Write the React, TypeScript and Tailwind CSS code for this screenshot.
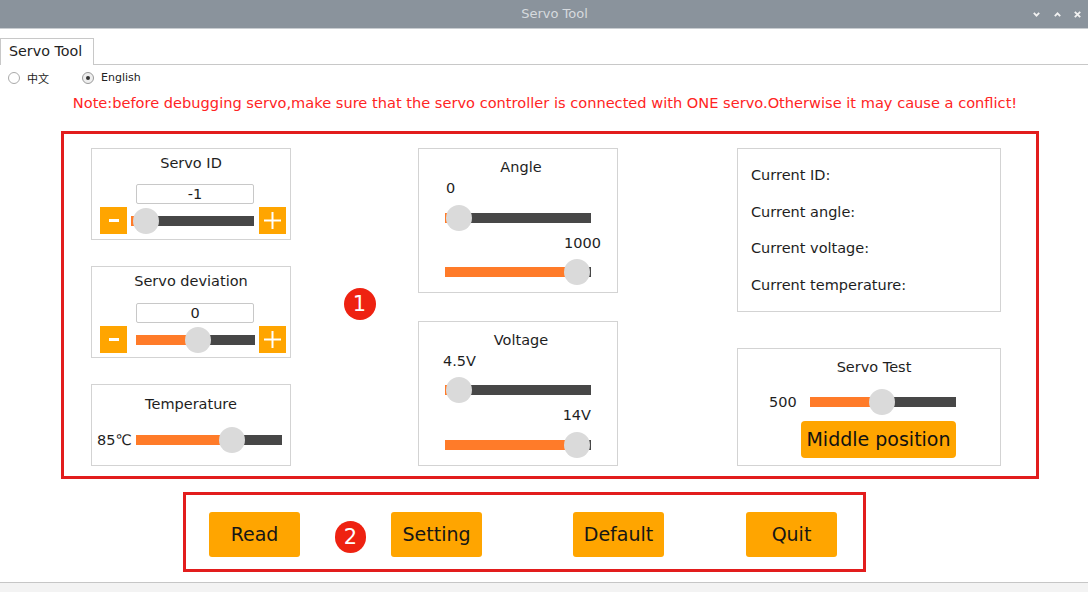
import React from "react";

function Slider({ w, pos }: { w: number; pos: number }) {
  return (
    <div className="relative h-[26px] shrink-0" style={{ width: w }}>
      <div className="absolute left-0 top-[8px] h-[10px] w-full bg-[#474747]" />
      <div className="absolute left-0 top-[8px] h-[10px] bg-[#ff7b29]" style={{ width: pos }} />
      <div
        className="absolute top-0 h-[26px] w-[26px] rounded-full bg-[#dadada]"
        style={{ left: pos - 13 }}
      />
    </div>
  );
}

function MinusBtn() {
  return (
    <div className="w-[27px] h-[27px] bg-[#ffa500] flex items-center justify-center shrink-0">
      <div className="w-[10px] h-[3px] bg-white" />
    </div>
  );
}

function PlusBtn() {
  return (
    <div className="w-[27px] h-[27px] bg-[#ffa500] flex items-center justify-center shrink-0">
      <svg width="19" height="19" viewBox="0 0 19 19">
        <path d="M9.5 1v17M1 9.5h17" stroke="#fff" strokeWidth="2" />
      </svg>
    </div>
  );
}

function Panel({ className, children }: { className: string; children?: React.ReactNode }) {
  return <div className={"border border-[#d3d3d3] bg-white flex flex-col " + className}>{children}</div>;
}

function Badge({ n, size }: { n: string; size: string }) {
  return (
    <div
      className={
        "rounded-full bg-[#ee2211] text-white flex items-center justify-center text-[21px] leading-none shrink-0 " +
        size
      }
    >
      {n}
    </div>
  );
}

function BigBtn({ label }: { label: string }) {
  return (
    <div className="w-[91px] h-[45px] rounded-[3px] bg-[#ffa500] flex items-center justify-center text-[19px] text-[#161616] shrink-0">
      {label}
    </div>
  );
}

export default function App() {
  return (
    <div className="w-[1088px] h-[592px] bg-white overflow-hidden flex flex-col font-['DejaVu_Sans','Noto_Sans_CJK_SC',sans-serif] text-[#1e1e1e]">
      {/* title bar */}
      <div className="h-[28px] bg-[#8a939c] flex items-center shrink-0">
        <div className="flex-1 text-center text-[13px] text-[#d6dade] pl-[76px]">Servo Tool</div>
        <div className="flex items-center pr-[7px]">
          <svg width="7" height="5" viewBox="0 0 7 5">
            <path d="M0.8 0.8L3.5 3.6L6.2 0.8" stroke="#f2f2f2" strokeWidth="1.8" fill="none" />
          </svg>
          <svg width="7" height="5" viewBox="0 0 7 5" className="ml-[14px]">
            <path d="M0.8 4.2L3.5 1.4L6.2 4.2" stroke="#f2f2f2" strokeWidth="1.8" fill="none" />
          </svg>
          <svg width="7" height="7" viewBox="0 0 7 7" className="ml-[13px]">
            <path d="M0.8 0.8L6.2 6.2M6.2 0.8L0.8 6.2" stroke="#f2f2f2" strokeWidth="1.8" fill="none" />
          </svg>
        </div>
      </div>
      <div className="h-[1px] bg-[#c9cdd1] shrink-0" />
      <div className="h-[9px] shrink-0" />

      {/* tab row */}
      <div className="h-[27px] flex shrink-0">
        <div className="w-[94px] h-[27px] border border-b-0 border-[#c8c8c8] bg-white flex items-center pl-[8px] text-[14.3px] text-[#222]">
          Servo Tool
        </div>
        <div className="flex-1 border-b border-[#c8c8c8]" />
      </div>

      {/* radio row */}
      <div className="h-[26px] flex items-center text-[11px] text-[#222] shrink-0">
        <div className="ml-[8px] w-[12px] h-[12px] rounded-full border border-[#aaaaaa] bg-white" />
        <span className="ml-[7px] font-['Noto_Sans_CJK_SC',sans-serif]">中文</span>
        <div className="ml-[33px] w-[12px] h-[12px] rounded-full border border-[#9a9a9a] bg-[#eeeeee] flex items-center justify-center">
          <div className="w-[4px] h-[4px] rounded-full bg-[#333]" />
        </div>
        <span className="ml-[7px]">English</span>
      </div>

      {/* note */}
      <div className="h-[24px] flex items-center justify-center text-[14.6px] text-[#ff2424] shrink-0 pl-[2px]">
        Note:before debugging servo,make sure that the servo controller is connected with ONE servo.Otherwise it may cause a conflict!
      </div>
      <div className="h-[16px] shrink-0" />

      {/* box 1 */}
      <div className="ml-[61px] w-[978px] h-[348px] border-[3px] border-[#e21d1d] flex pl-[27px] pt-[14px] shrink-0 text-[14.5px]">
        {/* col 1 */}
        <div className="w-[200px] flex flex-col">
          <Panel className="h-[92px]">
            <div className="pt-[6px] h-[23px] leading-[17px] text-center">Servo ID</div>
            <div className="mt-[12px] ml-[44px] w-[118px] h-[20px] border border-[#c8c8c8] rounded-[2px] flex items-center justify-center leading-none">
              -1
            </div>
            <div className="mt-[3px] pl-[8px] flex items-center">
              <MinusBtn />
              <div className="ml-[4px]">
                <Slider w={123} pos={15} />
              </div>
              <div className="ml-[5px]">
                <PlusBtn />
              </div>
            </div>
          </Panel>
          <Panel className="h-[92px] mt-[26px]">
            <div className="pt-[6px] h-[23px] leading-[17px] text-center">Servo deviation</div>
            <div className="mt-[13px] ml-[44px] w-[118px] h-[20px] border border-[#c8c8c8] rounded-[2px] flex items-center justify-center leading-none">
              0
            </div>
            <div className="mt-[3px] pl-[8px] flex items-center">
              <MinusBtn />
              <div className="ml-[9px]">
                <Slider w={119} pos={62} />
              </div>
              <div className="ml-[4px]">
                <PlusBtn />
              </div>
            </div>
          </Panel>
          <Panel className="h-[82px] mt-[26px]">
            <div className="pt-[11px] h-[28px] leading-[17px] text-center">Temperature</div>
            <div className="mt-[14px] pl-[5px] flex items-center">
              <span className="w-[39px] leading-none">85℃</span>
              <Slider w={146} pos={96} />
            </div>
          </Panel>
        </div>

        {/* gap with badge 1 */}
        <div className="w-[127px] flex justify-center pl-[10px]">
          <div className="mt-[140px]">
            <Badge n="1" size="w-[32px] h-[32px]" />
          </div>
        </div>

        {/* col 2 */}
        <div className="w-[200px] flex flex-col">
          <Panel className="h-[145px]">
            <div className="pt-[10px] h-[27px] leading-[17px] text-center pl-[6px]">Angle</div>
            <div className="mt-[4px] h-[17px] leading-[17px] pl-[27px]">0</div>
            <div className="mt-[8px] pl-[26px]">
              <Slider w={146} pos={14} />
            </div>
            <div className="mt-[4px] h-[17px] leading-[17px] text-right pr-[16px]">1000</div>
            <div className="mt-[7px] pl-[26px]">
              <Slider w={146} pos={132} />
            </div>
          </Panel>
          <Panel className="h-[145px] mt-[28px]">
            <div className="pt-[10px] h-[27px] leading-[17px] text-center pl-[6px]">Voltage</div>
            <div className="mt-[4px] h-[17px] leading-[17px] pl-[24px]">4.5V</div>
            <div className="mt-[7px] pl-[26px]">
              <Slider w={146} pos={14} />
            </div>
            <div className="mt-[4px] h-[17px] leading-[17px] text-right pr-[26px]">14V</div>
            <div className="mt-[8px] pl-[26px]">
              <Slider w={146} pos={132} />
            </div>
          </Panel>
        </div>

        <div className="w-[119px]" />

        {/* col 3 */}
        <div className="w-[264px] flex flex-col">
          <Panel className="h-[164px] pt-[8px] pl-[13px]">
            <div className="h-[36.5px] leading-[36.5px]">Current ID:</div>
            <div className="h-[36.5px] leading-[36.5px]">Current angle:</div>
            <div className="h-[36.5px] leading-[36.5px]">Current voltage:</div>
            <div className="h-[36.5px] leading-[36.5px]">Current temperature:</div>
          </Panel>
          <Panel className="h-[118px] mt-[36px]">
            <div className="pt-[10px] h-[27px] leading-[17px] text-center pl-[10px]">Servo Test</div>
            <div className="mt-[13px] pl-[31px] flex items-center">
              <span className="w-[41px] leading-none">500</span>
              <Slider w={146} pos={72} />
            </div>
            <div className="mt-[6px] ml-[63px] w-[155px] h-[37px] rounded-[4px] bg-[#ffa500] flex items-center justify-center text-[19px] text-[#111]">
              Middle position
            </div>
          </Panel>
        </div>
      </div>

      <div className="h-[13px] shrink-0" />

      {/* box 2 */}
      <div className="ml-[183px] w-[683px] h-[80px] border-[3px] border-[#e21d1d] flex items-start pt-[17px] pl-[23px] shrink-0">
        <BigBtn label="Read" />
        <div className="ml-[35px] mt-[9px]">
          <Badge n="2" size="w-[31px] h-[32px]" />
        </div>
        <div className="ml-[25px]">
          <BigBtn label="Setting" />
        </div>
        <div className="ml-[91px]">
          <BigBtn label="Default" />
        </div>
        <div className="ml-[82px]">
          <BigBtn label="Quit" />
        </div>
      </div>

      <div className="h-[10px] shrink-0" />
      <div className="h-[1px] bg-[#c6c6c6] shrink-0" />
      <div className="flex-1 bg-[#f3f3f3]" />
    </div>
  );
}
